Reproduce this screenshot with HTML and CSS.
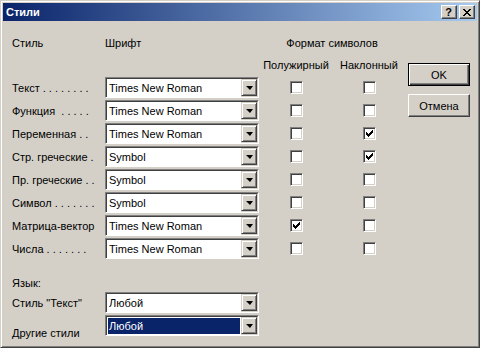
FILE: index.html
```html
<!DOCTYPE html>
<html lang="ru">
<head>
<meta charset="utf-8">
<title>Стили</title>
<link rel="stylesheet" href="styles.css">
</head>
<body>
<div class="window">
  <div class="titlebar">
    <span class="title">Стили</span>
    <div class="tbtns">
      <div class="tbtn help">?</div>
      <div class="tbtn close">
        <svg width="8" height="7" viewBox="0 0 8 7" shape-rendering="crispEdges"><path d="M0 0h2v1h-2zM6 0h2v1h-2zM1 1h2v1h-2zM5 1h2v1h-2zM2 2h4v1h-4zM3 3h2v1h-2zM2 4h4v1h-4zM1 5h2v1h-2zM5 5h2v1h-2zM0 6h2v1h-2zM6 6h2v1h-2z" fill="#000"/></svg>
      </div>
    </div>
  </div>
  <div class="content">
    <div class="form">
      <div class="grid">
        <div class="hdr">Стиль</div>
        <div class="hdr">Шрифт</div>
        <div class="hdr span2">Формат символов</div>
        <div></div><div></div>
        <div class="hdr center">Полужирный</div>
        <div class="hdr center">Наклонный</div>

        <div class="lbl">Текст . . . . . . . .</div>
        <div class="combo"><span class="val">Times New Roman</span><span class="drop"><i></i></span></div>
        <div class="cell"><span class="chk"></span></div>
        <div class="cell"><span class="chk"></span></div>

        <div class="lbl">Функция &nbsp;. . . . .</div>
        <div class="combo"><span class="val">Times New Roman</span><span class="drop"><i></i></span></div>
        <div class="cell"><span class="chk"></span></div>
        <div class="cell"><span class="chk"></span></div>

        <div class="lbl">Переменная . .</div>
        <div class="combo"><span class="val">Times New Roman</span><span class="drop"><i></i></span></div>
        <div class="cell"><span class="chk"></span></div>
        <div class="cell"><span class="chk on"><svg width="7" height="7" viewBox="0 0 7 7" shape-rendering="crispEdges"><path d="M0 2h1v3h-1zM1 3h1v3h-1zM2 4h1v3h-1zM3 3h1v3h-1zM4 2h1v3h-1zM5 1h1v3h-1zM6 0h1v3h-1z" fill="#000"/></svg></span></div>

        <div class="lbl">Стр. греческие .</div>
        <div class="combo"><span class="val">Symbol</span><span class="drop"><i></i></span></div>
        <div class="cell"><span class="chk"></span></div>
        <div class="cell"><span class="chk on"><svg width="7" height="7" viewBox="0 0 7 7" shape-rendering="crispEdges"><path d="M0 2h1v3h-1zM1 3h1v3h-1zM2 4h1v3h-1zM3 3h1v3h-1zM4 2h1v3h-1zM5 1h1v3h-1zM6 0h1v3h-1z" fill="#000"/></svg></span></div>

        <div class="lbl">Пр. греческие . .</div>
        <div class="combo"><span class="val">Symbol</span><span class="drop"><i></i></span></div>
        <div class="cell"><span class="chk"></span></div>
        <div class="cell"><span class="chk"></span></div>

        <div class="lbl">Символ . . . . . . .</div>
        <div class="combo"><span class="val">Symbol</span><span class="drop"><i></i></span></div>
        <div class="cell"><span class="chk"></span></div>
        <div class="cell"><span class="chk"></span></div>

        <div class="lbl">Матрица-вектор</div>
        <div class="combo"><span class="val">Times New Roman</span><span class="drop"><i></i></span></div>
        <div class="cell"><span class="chk on"><svg width="7" height="7" viewBox="0 0 7 7" shape-rendering="crispEdges"><path d="M0 2h1v3h-1zM1 3h1v3h-1zM2 4h1v3h-1zM3 3h1v3h-1zM4 2h1v3h-1zM5 1h1v3h-1zM6 0h1v3h-1z" fill="#000"/></svg></span></div>
        <div class="cell"><span class="chk"></span></div>

        <div class="lbl">Числа . . . . . . .</div>
        <div class="combo"><span class="val">Times New Roman</span><span class="drop"><i></i></span></div>
        <div class="cell"><span class="chk"></span></div>
        <div class="cell"><span class="chk"></span></div>
      </div>

      <div class="lang">
        <div class="lbl">Язык:</div>
        <div></div>
        <div class="lbl">Стиль "Текст"</div>
        <div class="combo"><span class="val">Любой</span><span class="drop"><i></i></span></div>
        <div class="lbl low">Другие стили</div>
        <div class="combo"><span class="val sel">Любой</span><span class="drop"><i></i></span></div>
      </div>
    </div>
    <div class="buttons">
      <div class="btn default"><span>OK</span></div>
      <div class="btn"><span>Отмена</span></div>
    </div>
  </div>
</div>
</body>
</html>
```

FILE: styles.css
```css
html, body {
  margin: 0;
  padding: 0;
}
body {
  width: 480px;
  height: 348px;
  overflow: hidden;
  font-family: "Liberation Sans", Arial, sans-serif;
  font-size: 11px;
  color: #000;
  background: #d4d0c8;
}
.window {
  box-sizing: border-box;
  width: 480px;
  height: 348px;
  background: #d4d0c8;
  border-top: 1px solid #d4d0c8;
  border-left: 1px solid #d4d0c8;
  border-right: 1px solid #404040;
  border-bottom: 1px solid #404040;
  box-shadow: inset 1px 1px 0 #fff, inset -1px -1px 0 #808080;
  padding: 2px;
  display: flex;
  flex-direction: column;
}
.titlebar {
  height: 18px;
  background: linear-gradient(to right, #0a246a, #a6caf0);
  display: flex;
  align-items: center;
  justify-content: space-between;
  padding: 0 2px 0 2px;
}
.title {
  color: #fff;
  font-weight: bold;
  font-size: 11px;
  padding-left: 1px;
}
.tbtns {
  display: flex;
  gap: 2px;
}
.tbtn {
  box-sizing: border-box;
  width: 16px;
  height: 14px;
  background: #d4d0c8;
  border-top: 1px solid #fff;
  border-left: 1px solid #fff;
  border-right: 1px solid #404040;
  border-bottom: 1px solid #404040;
  box-shadow: inset -1px -1px 0 #808080;
  display: flex;
  align-items: center;
  justify-content: center;
}
.tbtn.help {
  font-weight: bold;
  font-size: 11px;
  line-height: 12px;
  padding-right: 1px;
}
.tbtn.close svg {
  display: block;
  margin-right: 1px;
}
.content {
  flex: 1;
  display: flex;
  padding: 12px 0 0 9px;
}
.grid {
  display: grid;
  grid-template-columns: 93px 154px 74px 72px;
  grid-template-rows: 20px 20px repeat(8, 21px);
  row-gap: 2px;
}
.hdr {
  display: flex;
  align-items: center;
  white-space: nowrap;
}
.hdr.span2 {
  grid-column: span 2;
  justify-content: center;
}
.hdr.center {
  justify-content: center;
}
.lbl {
  display: flex;
  align-items: center;
  white-space: nowrap;
}
.cell {
  display: flex;
  align-items: center;
  justify-content: center;
}
.combo {
  box-sizing: border-box;
  height: 21px;
  border-top: 1px solid #808080;
  border-left: 1px solid #808080;
  border-right: 1px solid #fff;
  border-bottom: 1px solid #fff;
  display: flex;
}
.combo .val {
  flex: 1;
  background: #fff;
  border-top: 1px solid #404040;
  border-left: 1px solid #404040;
  display: flex;
  align-items: center;
  padding-left: 2px;
  white-space: nowrap;
  overflow: hidden;
}
.combo .val.sel {
  background: #0a246a;
  color: #fff;
  box-shadow: inset 0 0 0 1px #fff;
  padding-left: 2px;
}
.drop {
  box-sizing: border-box;
  width: 17px;
  background: #d4d0c8;
  border-top: 1px solid #404040;
  border-right: 1px solid #d4d0c8;
  border-bottom: 1px solid #d4d0c8;
  display: flex;
  position: relative;
}
.drop i {
  flex: 1;
  box-sizing: border-box;
  border-top: 1px solid #d4d0c8;
  border-left: 1px solid #d4d0c8;
  border-right: 1px solid #404040;
  border-bottom: 1px solid #404040;
  box-shadow: inset 1px 1px 0 #fff, inset -1px -1px 0 #808080;
  display: flex;
  align-items: center;
  justify-content: center;
}
.drop i::after {
  content: "";
  width: 0;
  height: 0;
  border-left: 4px solid transparent;
  border-right: 3px solid transparent;
  border-top: 4px solid #000;
  margin-top: 1px;
}
.chk {
  box-sizing: border-box;
  width: 13px;
  height: 13px;
  background: #fff;
  border-top: 1px solid #808080;
  border-left: 1px solid #808080;
  border-right: 1px solid #fff;
  border-bottom: 1px solid #fff;
  box-shadow: inset 1px 1px 0 #404040, inset -1px -1px 0 #d4d0c8;
  display: flex;
  align-items: center;
  justify-content: center;
}
.chk svg {
  display: block;
}
.lang {
  display: grid;
  grid-template-columns: 93px 154px;
  grid-template-rows: 16px 21px 21px;
  row-gap: 1px;
  margin-top: 16px;
}
.lang .combo:last-child {
  margin-top: 1px;
}
.lbl.low {
  align-self: end;
  height: 13px;
  margin-bottom: -4px;
}
.buttons {
  display: flex;
  flex-direction: column;
  gap: 8px;
  margin: 30px 0 0 3px;
}
.btn {
  box-sizing: border-box;
  width: 62px;
  height: 23px;
  background: #d4d0c8;
  border-top: 1px solid #fff;
  border-left: 1px solid #fff;
  border-right: 1px solid #404040;
  border-bottom: 1px solid #404040;
  box-shadow: inset -1px -1px 0 #808080;
  display: flex;
  align-items: center;
  justify-content: center;
}
.btn.default {
  border: 1px solid #000;
  box-shadow: inset 1px 1px 0 #fff, inset -1px -1px 0 #404040, inset -2px -2px 0 #808080;
}
```
